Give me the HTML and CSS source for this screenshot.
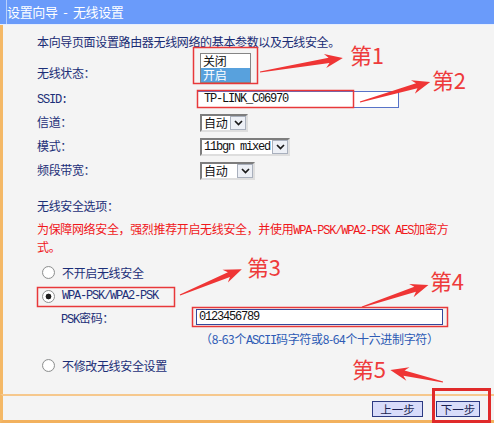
FILE: index.html
```html
<!DOCTYPE html>
<html>
<head>
<meta charset="utf-8">
<title>设置向导 - 无线设置</title>
<link rel="stylesheet" href="styles.css">
</head>
<body>
	<div class="title"><span class="title-text">设置向导 - 无线设置</span></div>
	<div class="panel">
		<p class="intro">本向导页面设置路由器无线网络的基本参数以及无线安全。</p>
		<div class="form">
			<div class="label label-status">无线状态：</div>
			<div class="listbox">
				<div class="opt">关闭</div>
				<div class="opt sel">开启</div>
			</div>

			<div class="label"><span class="mono">SSID:</span></div>
			<div><span class="textbox ssid mono">TP-LINK_C06970</span></div>

			<div class="label">信道：</div>
			<div>
				<span class="combo w48"><span class="val">自动</span><span class="drop"><svg width="9" height="6"><path d="M1 1 L4.5 4.5 L8 1" /></svg></span></span>
			</div>

			<div class="label">模式：</div>
			<div>
				<span class="combo w90"><span class="val mono">11bgn mixed</span><span class="drop"><svg width="9" height="6"><path d="M1 1 L4.5 4.5 L8 1" /></svg></span></span>
			</div>

			<div class="label">频段带宽：</div>
			<div>
				<span class="combo w55"><span class="val">自动</span><span class="drop"><svg width="9" height="6"><path d="M1 1 L4.5 4.5 L8 1" /></svg></span></span>
			</div>
		</div>

		<div class="sec-title">无线安全选项：</div>
		<div class="warn">为保障网络安全，强烈推荐开启无线安全，并使用<span class="mono">WPA-PSK/WPA2-PSK AES</span>加密方式。</div>

		<label class="radio-row first"><input class="radio" type="radio" name="sec"> 不开启无线安全</label>
		<label class="radio-row"><input class="radio" type="radio" name="sec" checked> <span class="mono">WPA-PSK/WPA2-PSK</span></label>
		<div class="psk-row">
			<span class="psk-label"><span class="mono">PSK</span>密码：</span>
			<span class="textbox psk mono">0123456789</span>
		</div>
		<div class="hint">（8-63个<span class="mono">ASCII</span>码字符或8-64个十六进制字符）</div>
		<label class="radio-row last"><input class="radio" type="radio" name="sec"> 不修改无线安全设置</label>
	</div>
	<div class="footer">
		<button class="step-btn prev">上一步</button>
		<button class="step-btn next">下一步</button>
	</div>

	<svg class="marks" width="494" height="423" viewBox="0 0 494 423">
		<g class="boxes">
			<rect x="193.5" y="47.5" width="64" height="36" />
			<rect x="197.5" y="90.5" width="156" height="17" />
			<rect x="37.5" y="287.5" width="137" height="19" />
			<rect x="192.5" y="307.5" width="255" height="19" />
		</g>
		<rect class="box-big" x="433.5" y="389.5" width="56" height="32" />
		<g class="arrows">
			<path transform="translate(260 72) rotate(-9.6)" d="M0 -0.6 L70 -2.6 L66 -7 L84 0 L66 7 L70 2.6 L0 0.6 Z" />
			<path transform="translate(360 102) rotate(-15.9)" d="M0 -0.6 L59 -2.6 L55 -7 L73 0 L55 7 L59 2.6 L0 0.6 Z" />
			<path transform="translate(180 295) rotate(-22.7)" d="M0 -0.6 L53 -2.6 L49 -7 L67 0 L49 7 L53 2.6 L0 0.6 Z" />
			<path transform="translate(362 307) rotate(-18.4)" d="M0 -0.6 L56 -2.6 L52 -7 L70 0 L52 7 L56 2.6 L0 0.6 Z" />
			<path transform="translate(443 382) rotate(192.8)" d="M0 -0.6 L40 -2.6 L36 -7 L54 0 L36 7 L40 2.6 L0 0.6 Z" />
		</g>
		<g class="steps">
			<text x="350" y="64">第1</text>
			<text x="432" y="89">第2</text>
			<text x="247" y="276">第3</text>
			<text x="430" y="290">第4</text>
			<text x="352" y="378">第5</text>
		</g>
	</svg>
</body>
</html>
```
FILE: styles.css
```css
body {
	margin: 0;
	width: 494px;
	height: 423px;
	position: relative;
	overflow: hidden;
	background: #f4f4f4;
	font-family: "Noto Sans CJK SC", sans-serif;
	font-size: 12px;
	letter-spacing: -0.35px;
	color: #1c2f78;
}
.mono {
	font-family: "Liberation Mono", "Noto Sans CJK SC", monospace;
	font-size: 12px;
	letter-spacing: -1.2px;
	line-height: 1;
}
.title {
	height: 24px;
	background: #6a9bfa;
	border-bottom: 1px solid #e6eefe;
	color: #fff;
	font-size: 13px;
	line-height: 24px;
}
.title-text {
	display: block;
	height: 24px;
	margin-left: 6px;
	border-left: 1px solid #b9d0fb;
	word-spacing: 3px;
}
.panel {
	height: 369px;
	box-sizing: border-box;
	border-left: 3px solid #f4b866;
	padding: 7px 0 0 34px;
}
.intro {
	margin: 0 0 1px;
	line-height: 20px;
	color: #1a2c74;
}
.form {
	display: grid;
	grid-template-columns: 163px auto;
	grid-template-rows: 33px repeat(4, 24px);
	align-items: center;
}
.label {
	line-height: 20px;
}
.label-status {
	align-self: end;
	padding-bottom: 3px;
}
.listbox {
	align-self: start;
	width: 49px;
	height: 28px;
	border: 1px solid #858585;
	background: #fff;
	color: #111;
}
.opt {
	line-height: 14px;
	padding-left: 2px;
}
.opt.sel {
	background: #58a1dd;
	color: #fff;
}
.textbox {
	display: inline-block;
	box-sizing: border-box;
	height: 17px;
	line-height: 15px;
	border: 1px solid #5873c8;
	background: #fff;
	color: #111;
	vertical-align: middle;
}
.ssid {
	width: 202px;
	margin-left: -3px;
	padding-left: 6px;
}
.combo {
	display: inline-flex;
	align-items: center;
	box-sizing: border-box;
	height: 18px;
	border: 2px solid;
	border-color: #7d7d7d #dedede #dedede #7d7d7d;
	background: #fff;
	color: #111;
	vertical-align: middle;
}
.w48 { width: 48px; }
.w55 { width: 55px; }
.w90 { width: 90px; }
.combo .val {
	flex: 1;
	padding-left: 2px;
	line-height: 14px;
	white-space: nowrap;
}
.drop {
	display: flex;
	align-items: center;
	justify-content: center;
	width: 16px;
	height: 14px;
	box-sizing: border-box;
	border: 1px solid #a9b0bd;
	background: #edf0f6;
}
.drop path {
	fill: none;
	stroke: #1a1a1a;
	stroke-width: 1.7;
}
.sec-title {
	margin-top: 15px;
	line-height: 18px;
}
.warn {
	margin-top: 5px;
	width: 420px;
	line-height: 18px;
	color: #f0171b;
}
.radio-row {
	display: flex;
	align-items: center;
	gap: 7px;
	height: 24px;
	padding-left: 5px;
}
.radio-row.first {
	margin-top: 4px;
}
.radio-row.last {
	margin-top: 5px;
}
.radio {
	-webkit-appearance: none;
	appearance: none;
	margin: 0;
	width: 13px;
	height: 13px;
	border: 1px solid #8e9090;
	border-radius: 50%;
	background: radial-gradient(circle, #ffffff 55%, #e4e4e4 100%);
}
.radio:checked {
	background: radial-gradient(circle, #1e1e1e 0 2.6px, #ffffff 3.2px);
}
.psk-row {
	display: flex;
	align-items: center;
	height: 18px;
	padding-left: 24px;
}
.psk-label {
	width: 135px;
}
.psk {
	width: 247px;
	height: 16px;
	line-height: 14px;
	padding-left: 2px;
	border-color: #34489c;
}
.hint {
	margin-top: 4px;
	padding-left: 163px;
	line-height: 18px;
	color: #2d5bb5;
}
.footer {
	display: flex;
	justify-content: flex-end;
	align-items: flex-start;
	gap: 13px;
	height: 29px;
	box-sizing: border-box;
	padding: 5px 14px 0 0;
	border-top: 2px solid #f6c88d;
	border-bottom: 3px solid #f2b15e;
	border-left: 3px solid #f4b866;
}
.step-btn {
	height: 16px;
	padding: 0;
	border: 1px solid #2c3a82;
	background: #d8dcfa;
	color: #1a1f50;
	font-family: "Noto Sans CJK SC", sans-serif;
	font-size: 11.5px;
	line-height: 14px;
}
.prev { width: 51px; }
.next { width: 44px; }
.marks {
	position: absolute;
	top: 0;
	left: 0;
	pointer-events: none;
}
.boxes rect {
	fill: none;
	stroke: #e8383a;
	stroke-width: 1.5;
}
.box-big {
	fill: none;
	stroke: #e02a2a;
	stroke-width: 3;
}
.arrows path {
	fill: #ef3535;
}
.steps text {
	fill: #ee3b3b;
	font-family: "Noto Sans CJK SC", sans-serif;
	font-size: 22px;
}
```
